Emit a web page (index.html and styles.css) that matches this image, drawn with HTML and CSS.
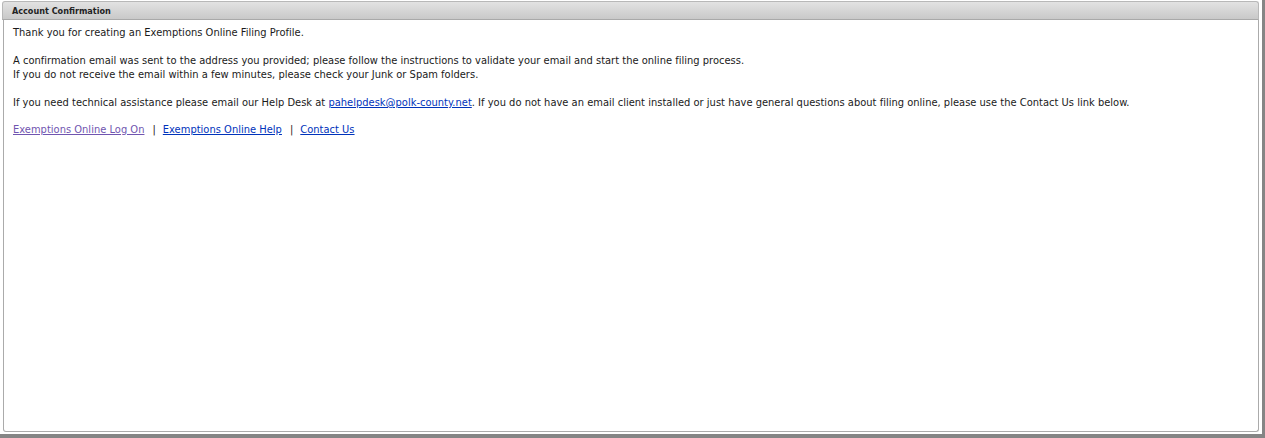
FILE: index.html
```html
<!DOCTYPE html>
<html lang="en">
<head>
<meta charset="utf-8">
<title>Account Confirmation</title>
<link rel="stylesheet" href="styles.css">
</head>
<body>
<div class="frame">
  <div class="panel">
    <div class="panel-header">Account Confirmation</div>
    <div class="panel-body">
      <p>Thank you for creating an Exemptions Online Filing Profile.</p>
      <p>A confirmation email was sent to the address you provided; please follow the instructions to validate your email and start the online filing process.<br>If you do not receive the email within a few minutes, please check your Junk or Spam folders.</p>
      <p>If you need technical assistance please email our Help Desk at <a class="link" href="#">pahelpdesk@polk-county.net</a>. If you do not have an email client installed or just have general questions about filing online, please use the Contact Us link below.</p>
      <p class="links"><a class="link visited" href="#">Exemptions Online Log On</a><span class="sep">|</span><a class="link" href="#">Exemptions Online Help</a><span class="sep">|</span><a class="link" href="#">Contact Us</a></p>
    </div>
  </div>
</div>
</body>
</html>
```
FILE: styles.css
```css
html, body {
  margin: 0;
  padding: 0;
  background: #ffffff;
}
body {
  font-family: "DejaVu Sans Condensed", "DejaVu Sans", sans-serif;
  font-size: 11px;
  color: #1a1a1a;
}
.frame {
  box-sizing: border-box;
  width: 1265px;
  height: 438px;
  padding: 1px 3px 2px 2px;
  border-right: 3px solid #858585;
  border-bottom: 4px solid #858585;
  display: flex;
  flex-direction: column;
}
.panel {
  flex: 1;
  display: flex;
  flex-direction: column;
}
.panel-header {
  box-sizing: border-box;
  height: 19px;
  padding: 3px 0 0 9px;
  border: 1px solid #b8b8b8;
  border-bottom-color: #a9a9a9;
  border-radius: 3px 3px 0 0;
  background: linear-gradient(#e2e2e2, #c9c9c9);
  font-size: 9px;
  font-weight: bold;
  color: #222;
  line-height: 12px;
}
.panel-body {
  flex: 1;
  margin-left: 1px;
  padding: 6px 8px 5px 9px;
  border: 1px solid #ababab;
  border-top: none;
  border-radius: 0 0 3px 3px;
  line-height: 14px;
  letter-spacing: 0.02px;
}
.panel-body p {
  margin: 0 0 14px 0;
}
.panel-body p.links {
  margin-top: -1px;
}
.link {
  color: #0033bb;
  text-decoration: underline;
}
.link.visited {
  color: #7055b0;
}
.sep {
  margin: 0 7px 0 8px;
  color: #222;
}
```
